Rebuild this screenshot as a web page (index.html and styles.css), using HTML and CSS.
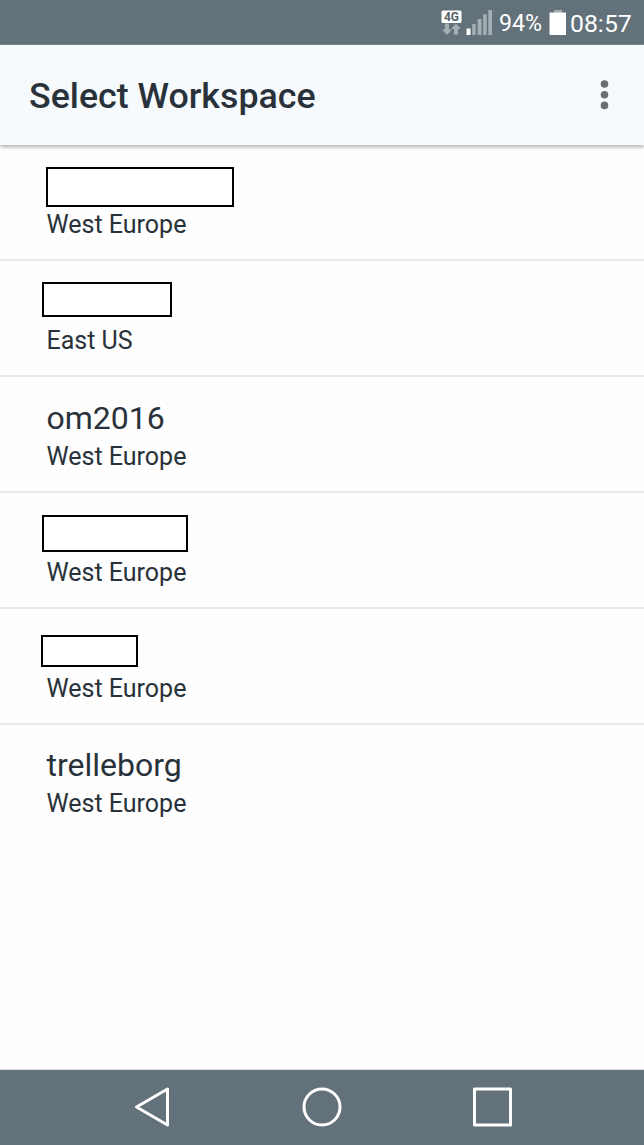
FILE: index.html
```html
<!DOCTYPE html>
<html lang="en">
<head>
<meta charset="utf-8">
<title>Select Workspace</title>
<link rel="stylesheet" href="styles.css">
</head>
<body>
<div class="phone">
  <div class="status-bar">
    <svg class="network" width="52" height="28" viewBox="0 0 52 28">
      <rect x="0.5" y="2.5" width="20" height="12.5" rx="1.5" fill="#fff"/>
      <text class="network-label" x="10.5" y="12.8" text-anchor="middle">4G</text>
      <path d="M4 15.5h4v6h3l-5 5.5-5-5.500h3zM13 26.500v-5.500h-3l5-5.500 5 5.500h-3v5.500z" fill="#a4afb4"/>
      <path d="M25.500 20.500h4v6.500h-4z" fill="#fff"/>
      <path d="M31.200 16h3.500v11h-3.500zM36.700 11h3.800v16h-3.800zM42.200 6.200h3.500v20.800h-3.500zM47.300 2h3.700v25h-3.700z" fill="#a4afb4"/>
    </svg>
    <span class="percent">94%</span>
    <svg class="battery" width="18" height="27" viewBox="0 0 18 27">
      <path d="M5 1h8v3H5z" fill="#a4afb4"/><path d="M.5 3.500h16.500v22.500H.5z" fill="#fff"/>
    </svg>
    <span class="clock">08:57</span>
  </div>
  <header class="app-bar">
    <h1 class="title">Select Workspace</h1>
    <svg class="menu" width="10" height="32" viewBox="0 0 10 32">
      <g fill="#6c6e70"><circle cx="5.500" cy="4" r="3.800"/><circle cx="5.500" cy="14.700" r="3.800"/><circle cx="5.500" cy="25.400" r="3.800"/></g>
    </svg>
  </header>
  <main class="list">
    <div class="row"><div class="masked mask-a"></div><div class="region">West Europe</div></div>
    <div class="row"><div class="masked mask-b"></div><div class="region">East US</div></div>
    <div class="row"><div class="name">om2016</div><div class="region">West Europe</div></div>
    <div class="row"><div class="masked mask-c"></div><div class="region">West Europe</div></div>
    <div class="row"><div class="masked mask-d"></div><div class="region">West Europe</div></div>
    <div class="row row-last"><div class="name">trelleborg</div><div class="region">West Europe</div></div>
  </main>
  <nav class="nav-bar">
    <svg width="644" height="75" viewBox="0 0 644 75" fill="none" stroke="#fff" stroke-width="3" stroke-linejoin="round">
      <path d="M136.500 37L167.500 19V55Z"/>
      <circle cx="322" cy="37" r="18"/>
      <rect x="474.500" y="19" width="36" height="36"/>
    </svg>
  </nav>
</div>
</body>
</html>
```
FILE: styles.css
```css
* { box-sizing: border-box; }
body { margin: 0; background: #fefefe; color: #29323a; font-family: Roboto, sans-serif; }
.phone { display: flex; flex-direction: column; width: 644px; height: 1145px; }
.status-bar { display: flex; align-items: center; justify-content: flex-end; height: 45px; padding-right: 12px; background: #62717a; border-bottom: 1px solid #7c8990; color: #fff; }
.network { margin-right: 6px; }
.network-label { font: bold 12px Roboto, sans-serif; fill: #53616a; }
.percent { width: 42px; margin-right: 8px; font-size: 23.2px; line-height: 44px; white-space: nowrap; padding-top: 2px; }
.battery { margin-right: 3px; }
.clock { width: 62px; font-size: 24.8px; line-height: 44px; padding-top: 4px; white-space: nowrap; }
.app-bar { display: flex; align-items: center; justify-content: space-between; height: 100px; padding: 1px 35px 0 29px; background: #f6fafd; box-shadow: 0 2px 4px rgba(0, 0, 0, .32); z-index: 1; }
.title { margin: 0; font-size: 35.75px; font-weight: 500; line-height: 48px; }
.list { flex: 1; }
.row { display: flex; flex-direction: column; justify-content: flex-end; height: 116px; padding: 0 0 18px 46.5px; border-bottom: 2px solid #e9e9e9; }
.row-last { height: 115px; border-bottom-color: transparent; }
.name { margin-bottom: 3px; font-size: 32px; line-height: 40px; }
.region { font-size: 25px; line-height: 32px; }
.masked { border: 2px solid #000; background: #fff; }
.mask-a { width: 188px; height: 40px; margin: 0 0 2px -.5px; }
.mask-b { width: 130px; height: 35px; margin: 0 0 8px -4.5px; }
.mask-c { width: 146px; height: 37px; margin: 0 0 5px -4.5px; }
.mask-d { width: 97px; height: 32px; margin: 0 0 6px -5.5px; }
.nav-bar { height: 76px; background: #62717a; border-top: 1px solid #dce1e3; }
.nav-bar svg { display: block; }
```
